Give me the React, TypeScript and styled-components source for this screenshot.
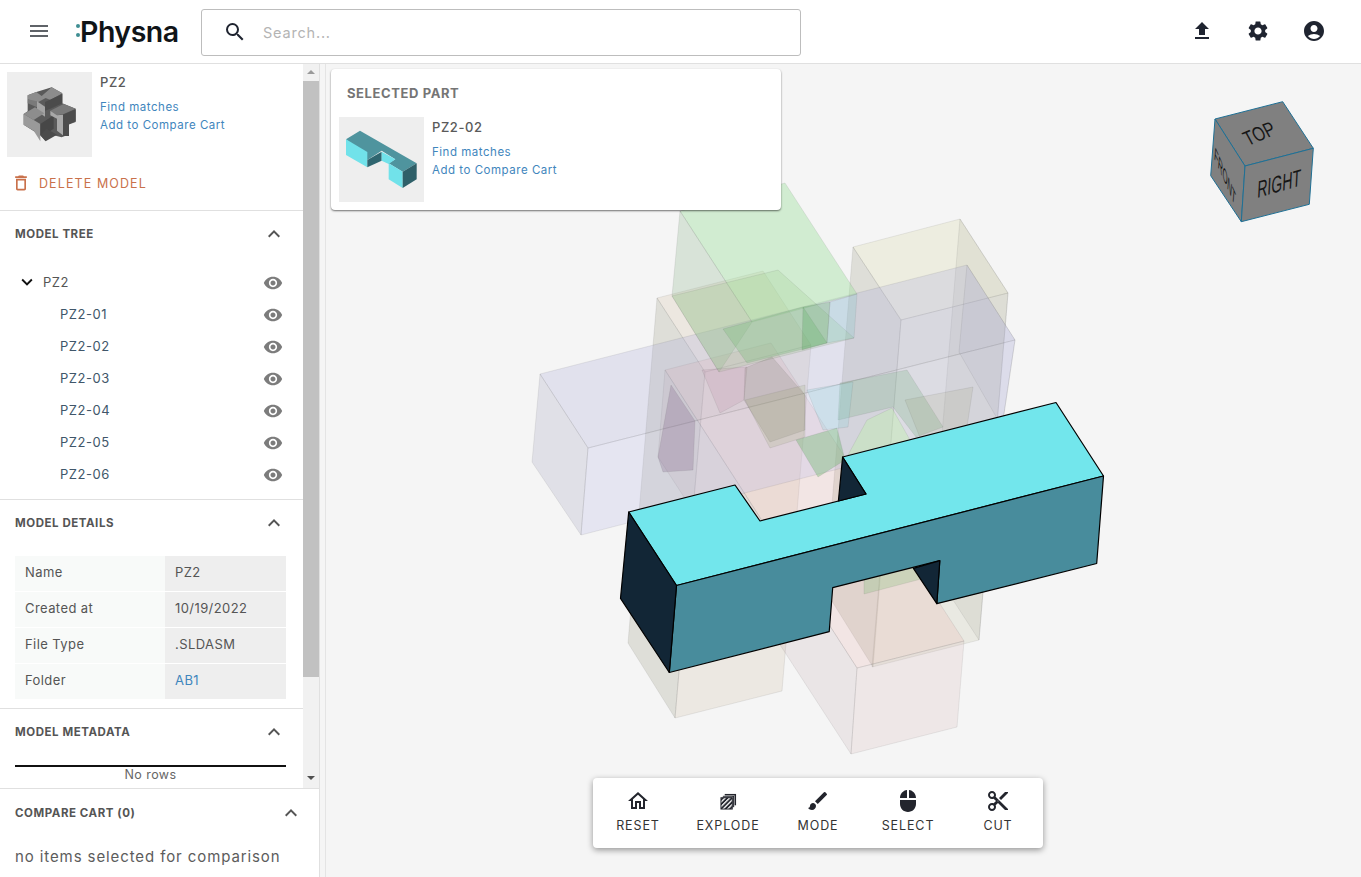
import React from "react";
import styled, { createGlobalStyle } from "styled-components";
import {
  MdMenu, MdSearch, MdFileUpload, MdSettings, MdAccountCircle, MdDeleteOutline,
  MdExpandLess, MdExpandMore, MdVisibility, MdOutlineHome, MdBrush, MdMouse, MdContentCut,
} from "react-icons/md";

const Global = createGlobalStyle`
  html, body { margin: 0; padding: 0; height: 100%; overflow: hidden; background: #fff; }
  * { box-sizing: border-box; }
  body { font-family: Inter, "Noto Sans", "Liberation Sans", sans-serif; }
`;

const Page = styled.div`width: 1361px; height: 877px; display: flex; flex-direction: column; overflow: hidden;`;
const Header = styled.header`
  height: 64px; flex: none; display: flex; align-items: center; border-bottom: 1px solid #e0e0e0; background: #fff;
  padding: 0 35px 1px 27px;
`;
const MenuButton = styled.div`display: flex; color: #5f6368; margin-right: 25px;`;
const Logo = styled.div`
  position: relative; width: 102px; margin-right: 23px; padding-left: 4px; margin-top: 2px;
  font-family: Inter, sans-serif; font-weight: 600; font-size: 28.5px; letter-spacing: -0.5px; color: #101418; line-height: 32px;
`;
const LogoDot = styled.i<{ $top: number }>`
  position: absolute; left: 0; top: ${(p) => p.$top}px; width: 4px; height: 4px; border-radius: 50%; background: #3f8e93;
`;
const Search = styled.div`
  width: 600px; height: 47px; margin-top: 2px; border: 1px solid #bdbdbd; border-radius: 3px; display: flex; align-items: center;
  padding-left: 21px; gap: 16px; color: #1f2430;
`;
const Placeholder = styled.span`font-size: 14.5px; letter-spacing: 0.8px; color: #b4b4b4;`;
const HeaderIcons = styled.div`margin-left: auto; display: flex; gap: 32px; color: #1f2430;`;

const Body = styled.div`flex: 1; display: flex; min-height: 0;`;
const Sidebar = styled.aside`width: 320px; flex: none; border-right: 1px solid #e0e0e0; display: flex; flex-direction: column; background: #fff;`;
const Gutter = styled.div`width: 6px; flex: none; background: #f5f5f5; border-right: 1px solid #e4e4e4;`;
const ScrollArea = styled.div`height: 725px; flex: none; display: flex; border-bottom: 1px solid #e0e0e0;`;
const ScrollContent = styled.div`width: 303px; flex: none; overflow: hidden;`;
const ScrollTrack = styled.div`flex: 1; background: #f1f1f1; display: flex; flex-direction: column; align-items: center; padding: 6px 0 0;`;
const ArrowUp = styled.i`width: 0; height: 0; border: 4px solid transparent; border-top: 0; border-bottom: 4px solid #9a9a9a;`;
const ArrowDown = styled.i`width: 0; height: 0; border: 4px solid transparent; border-bottom: 0; border-top: 4px solid #505050; margin-top: 99px;`;
const Thumb = styled.div`width: 100%; height: 596px; margin-top: 7px; background: #c1c1c1; flex: none;`;

const ModelHead = styled.div`height: 147px; padding: 8px 0 0 7px; border-bottom: 1px solid #e0e0e0;`;
const PartRow = styled.div`display: flex; gap: 8px;`;
const ThumbBox = styled.div`width: 85px; height: 85px; background: #eeeeee; flex: none;`;
const PartInfo = styled.div`display: flex; flex-direction: column; align-items: flex-start;`;
const PartName = styled.div`font-size: 13px; font-weight: 500; letter-spacing: 0.6px; color: #5a5a5a; line-height: 20px; margin-bottom: 6px;`;
const LinkText = styled.a`font-size: 11.5px; letter-spacing: 0.52px; color: #3f86bd; line-height: 18px;`;
const DeleteButton = styled.div`
  display: flex; align-items: center; gap: 8px; margin: 16px 0 0 4px; color: #c9714b; font-size: 12.5px; letter-spacing: 1.1px; text-transform: uppercase; height: 20px;
`;

const Section = styled.section<{ $h: number }>`display: flow-root; height: ${(p) => p.$h}px; padding: 0 17px 0 15px; border-bottom: 1px solid #e0e0e0;`;
const SectionHead = styled.div<{ $pt?: number }>`
  height: 20px; margin-top: ${(p) => p.$pt ?? 13}px; display: flex; justify-content: space-between; align-items: center;
  font-size: 11.5px; font-weight: 700; letter-spacing: 0.55px; color: #555; text-transform: uppercase; padding-right: 2px;
  svg { color: #555; margin-right: -2px; }
`;
const Tree = styled.div`padding: 22px 3px 0 0;`;
const TreeRow = styled.div<{ $child?: boolean }>`
  height: 32px; display: flex; align-items: center; justify-content: space-between; padding-left: ${(p) => (p.$child ? 45 : 1)}px;
  font-size: 13px; letter-spacing: 0.55px; color: #4a5560; svg.eye { color: #7c7c7c; margin-top: 1px; }
`;
const TreeLabel = styled.span`display: flex; align-items: center; gap: 5px; color: #555;`;
const TreeChild = styled.span`color: #40566a;`;
const DetailTable = styled.div`display: grid; grid-template-columns: 150px 121px; grid-auto-rows: 35px; row-gap: 1px; margin-top: 23px; font-size: 13px; letter-spacing: 0.42px; color: #555;`;
const Key = styled.div`background: #f8faf9; padding: 0 0 3px 10px; display: flex; align-items: center;`;
const Val = styled.div<{ $link?: boolean }>`background: #eeeeee; padding: 0 0 3px 10px; display: flex; align-items: center; color: ${(p) => (p.$link ? "#3f86bd" : "#555")};`;
const BlackLine = styled.div`height: 2px; background: #111; margin-top: 23px;`;
const NoRows = styled.div`text-align: center; font-size: 12.5px; letter-spacing: 0.45px; color: #666; line-height: 14px; margin-top: 1px;`;
const CartText = styled.div`font-size: 15px; letter-spacing: 0.9px; color: #5c5c5c; margin-top: 24px; line-height: 20px; white-space: nowrap;`;
const CartSection = styled.section`flex: 1; padding: 0 16px 0 15px;`;

const Viewer = styled.main`flex: 1; position: relative; background: #f5f5f5; overflow: hidden;`;
const Scene = styled.svg`display: block; width: 100%; height: 100%;`;
const Card = styled.div`
  position: absolute; left: 5px; top: 5px; width: 450px; height: 141px; background: #fff; border-radius: 4px;
  box-shadow: 0 1px 2px rgba(0,0,0,.55); padding: 14px 8px 0;
`;
const CardTitle = styled.div`font-size: 13px; font-weight: 700; letter-spacing: 0.6px; color: #757575; padding-left: 8px; line-height: 20px; margin-bottom: 14px;`;
const Toolbar = styled.div`
  position: absolute; left: 267px; top: 714px; width: 450px; height: 70px; background: #fff; border-radius: 4px;
  box-shadow: 0 2px 6px rgba(0,0,0,.4); display: flex;
`;
const ToolButton = styled.div`
  width: 90px; display: flex; flex-direction: column; align-items: center; padding-top: 11px; color: #23252d;
  span { margin-top: 5px; font-size: 12.5px; letter-spacing: 0.9px; line-height: 16px; color: #333; }
`;
const IconSlot = styled.div`height: 24px; display: flex; align-items: center; justify-content: center;`;

type Poly = [string, string];
const ghosts: Poly[] = [
  // tall beige-grey column, lower left
  ["657,298 763,271 811,345 705,372", "rgba(205,180,150,.22)"],
  ["657,298 705,372 675,718 628,643", "rgba(160,160,140,.28)"],
  ["705,372 811,345 782,691 675,718", "rgba(205,185,160,.22)"],
  // right tall beige column
  ["853,247 960,219 1008,293 901,320", "rgba(220,220,175,.3)"],
  ["853,247 901,320 873,667 825,590", "rgba(160,160,140,.28)"],
  ["901,320 1008,293 979,640 872,667", "rgba(190,190,160,.22)"],
  ["960,219 1008,293 979,640 931,566", "rgba(160,160,150,.16)"],
  // pink long box
  ["665,370 771,343 964,641 857,668", "rgba(230,175,170,.22)"],
  ["665,370 857,668 851,754 658,457", "rgba(190,160,165,.18)"],
  ["857,668 964,641 957,727 851,754", "rgba(215,180,180,.22)"],
  // lavender long block
  ["540,374 967,265 1015,340 588,448", "rgba(170,170,215,.26)"],
  ["540,374 588,448 581,535 532,462", "rgba(165,165,195,.26)"],
  ["588,448 1015,340 1002,427 581,535", "rgba(185,185,230,.26)"],
  ["967,265 1015,340 1002,427 959,352", "rgba(160,160,190,.12)"],
  // green block
  ["680,211 785,183 857,294 752,322", "rgba(160,225,160,.42)"],
  ["680,211 752,322 719,372 672,296", "rgba(150,185,150,.3)"],
  ["672,296 778,270 854,338 719,372", "rgba(150,200,130,.22)"],
  // inner accents
  ["723,329 803,307 827,343 747,363", "rgba(120,190,120,.32)"],
  ["803,307 830,302 827,343 802,350", "rgba(80,165,90,.32)"],
  ["830,302 857,294 854,338 827,343", "rgba(120,200,200,.22)"],
  ["702,370 747,367 744,400 720,413", "rgba(190,140,165,.2)"],
  ["671,385 695,421 693,470 663,472 658,457", "rgba(115,85,125,.24)"],
  ["745,368 772,357 805,395 805,430 770,442 744,400", "rgba(110,110,95,.18)"],
  ["745,400 805,385 805,437 770,448", "rgba(140,160,90,.16)"],
  ["796,440 837,428 845,460 818,477", "rgba(100,180,100,.36)"],
  ["867,420 892,408 910,440 848,455", "rgba(190,240,170,.4)"],
  ["840,383 907,370 943,427 916,437 893,407 838,420", "rgba(110,170,120,.24)"],
  ["807,390 853,382 848,427 823,430", "rgba(140,210,215,.26)"],
  ["864,580 913,568 925,578 864,594", "rgba(130,190,120,.28)"],
  ["905,400 973,387 965,440 925,450", "rgba(150,150,100,.14)"],
];

const Scene3D = () => (
  <Scene viewBox="326 64 1035 813">
    {ghosts.map(([points, fill], i) => (
      <polygon key={i} points={points} fill={fill} stroke="rgba(80,80,80,.13)" strokeWidth={0.8} />
    ))}
    <g stroke="#000" strokeWidth={1.2} strokeLinejoin="round">
      <polygon fill="#72e6ec" points="628.7,512 735,485 760,521 866,494 842.6,457 1056,402.5 1103.5,476 676.5,585.5" />
      <polygon fill="#488c9c" points="676.5,585.5 1103.5,476 1096.7,563.5 936.8,603.7 939.8,560.7 832.7,587.7 829.2,631.7 669.3,672.5" />
      <polygon fill="#122636" points="628.7,512 676.5,585.5 669.3,672.5 620.5,598.3" />
      <polygon fill="#122636" points="842.6,457 866,494 838.4,501" />
      <polygon fill="#122636" points="939.8,560.7 936.8,603.7 913.4,568.3" />
    </g>
    <g fill="#808080" stroke="#1f7095" strokeWidth={1} strokeLinejoin="round">
      <polygon points="1215,119 1282.7,101.7 1313.3,148.3 1245,166" />
      <polygon points="1215,119 1245,166 1241.3,221.7 1210.7,175.7" />
      <polygon points="1245,166 1313.3,148.3 1309.3,204.3 1241.3,221.7" />
    </g>
    <g fill="#161616" fontFamily="'Liberation Sans', sans-serif" fontSize="20">
      <text transform="matrix(.72 -.3 .5 .92 1248 146)">TOP</text>
      <text transform="matrix(.7 -.2 -.06 1.2 1257 198)">RIGHT</text>
      <text transform="matrix(.36 .82 -.08 1 1214 158)" fontSize="17">FRONT</text>
    </g>
  </Scene>
);

const AssemblyThumb = () => (
  <svg width="85" height="85" viewBox="0 0 255 255">
    <polygon fill="#5a5a5a" points="62,70 88,60 134,46 166,64 166,94 206,110 206,150 180,160 180,190 164,196 116,184 116,208 100,190 50,158 50,126 62,118" />
    <polygon fill="#8c8c8c" points="62,70 88,60 104,72 134,46 166,64 130,84 116,78 90,92 62,82" />
    <polygon fill="#a4a4a4" points="90,88 114,104 114,134 90,118" />
    <polygon fill="#7a7a7a" points="62,82 90,88 90,106 62,94" />
    <polygon fill="#4b4b4b" points="114,90 166,66 166,94 130,110 114,116" />
    <polygon fill="#8d8d8d" points="50,126 84,106 112,124 80,144" />
    <polygon fill="#9a9a9a" points="50,126 100,156 100,208 80,176 50,158" />
    <polygon fill="#474747" points="100,156 140,130 140,170 116,186 100,190" />
    <polygon fill="#7a7a7a" points="130,116 170,96 206,110 170,126 150,130" />
    <polygon fill="#a9a9a9" points="130,116 150,130 168,128 168,190 150,176 150,140 130,130" />
    <polygon fill="#4c4c4c" points="168,128 206,112 206,148 186,156 186,192 168,192" />
    <polygon fill="#4b4b4b" points="100,190 118,170 150,188 116,208" />
  </svg>
);

const PartThumb = () => (
  <svg width="85" height="85" viewBox="0 0 255 255">
    <polygon fill="#4f949e" points="21,67 63,41 233,139 191,164 149,139 169,127 128,101 85,129" />
    <polygon fill="#71e2ea" points="21,67 85,105 85,151 21,114" />
    <polygon fill="#2f6670" points="85,129 128,104 128,131 85,151" />
    <polygon fill="#71e2ea" points="128,104 169,127 149,141 128,131" />
    <polygon fill="#71e2ea" points="149,139 191,164 191,213 149,187" />
    <polygon fill="#2f6069" points="191,164 233,139 233,187 191,213" />
  </svg>
);

const ExplodeIcon = () => (
  <svg width="17" height="17" viewBox="0 0 18 18">
    <defs>
      <pattern id="hatch" width="3.4" height="3.4" patternUnits="userSpaceOnUse" patternTransform="rotate(45)">
        <rect width="3.4" height="3.4" fill="#23252d" />
        <rect width="1.4" height="3.4" fill="#fff" />
      </pattern>
    </defs>
    <rect x="5" y="1" width="12" height="12" fill="#23252d" />
    <path d="M3 4V2.8H15.2V14H14" fill="none" stroke="#fff" strokeWidth=".7" />
    <rect x="3" y="3" width="12" height="12" fill="#23252d" />
    <path d="M1.6 5.6V4.4H13.4V15.6" fill="none" stroke="#fff" strokeWidth=".7" />
    <rect x="1" y="5" width="12" height="12" fill="url(#hatch)" stroke="#23252d" strokeWidth="1" />
  </svg>
);

const parts = ["PZ2-01", "PZ2-02", "PZ2-03", "PZ2-04", "PZ2-05", "PZ2-06"];
const details: [string, string, boolean?][] = [
  ["Name", "PZ2"], ["Created at", "10/19/2022"], ["File Type", ".SLDASM"], ["Folder", "AB1", true],
];
const tools: [string, React.ReactNode][] = [
  ["RESET", <MdOutlineHome size={24} />],
  ["EXPLODE", <ExplodeIcon />],
  ["MODE", <MdBrush size={24} />],
  ["SELECT", <MdMouse size={24} />],
  ["CUT", <MdContentCut size={24} />],
];

export default function App() {
  return (
    <Page>
      <Global />
      <Header>
        <MenuButton><MdMenu size={24} /></MenuButton>
        <Logo><LogoDot $top={8} /><LogoDot $top={17} />Physna</Logo>
        <Search><MdSearch size={24} /><Placeholder>Search...</Placeholder></Search>
        <HeaderIcons><MdFileUpload size={24} /><MdSettings size={24} /><MdAccountCircle size={24} /></HeaderIcons>
      </Header>
      <Body>
        <Sidebar>
          <ScrollArea>
            <ScrollContent>
              <ModelHead>
                <PartRow>
                  <ThumbBox><AssemblyThumb /></ThumbBox>
                  <PartInfo>
                    <PartName>PZ2</PartName>
                    <LinkText>Find matches</LinkText>
                    <LinkText>Add to Compare Cart</LinkText>
                  </PartInfo>
                </PartRow>
                <DeleteButton><MdDeleteOutline size={20} />Delete Model</DeleteButton>
              </ModelHead>
              <Section $h={289}>
                <SectionHead>Model Tree<MdExpandLess size={24} /></SectionHead>
                <Tree>
                  <TreeRow>
                    <TreeLabel><MdExpandMore size={22} color="#111" />PZ2</TreeLabel>
                    <MdVisibility className="eye" size={20} />
                  </TreeRow>
                  {parts.map((p) => (
                    <TreeRow $child key={p}><TreeChild>{p}</TreeChild><MdVisibility className="eye" size={20} /></TreeRow>
                  ))}
                </Tree>
              </Section>
              <Section $h={209}>
                <SectionHead>Model Details<MdExpandLess size={24} /></SectionHead>
                <DetailTable>
                  {details.map(([k, v, l]) => (
                    <React.Fragment key={k}><Key>{k}</Key><Val $link={l}>{v}</Val></React.Fragment>
                  ))}
                </DetailTable>
              </Section>
              <Section $h={80}>
                <SectionHead>Model Metadata<MdExpandLess size={24} /></SectionHead>
                <BlackLine />
                <NoRows>No rows</NoRows>
              </Section>
            </ScrollContent>
            <ScrollTrack><ArrowUp /><Thumb /><ArrowDown /></ScrollTrack>
          </ScrollArea>
          <CartSection>
            <SectionHead $pt={14}>Compare Cart (0)<MdExpandLess size={24} /></SectionHead>
            <CartText>no items selected for comparison</CartText>
          </CartSection>
        </Sidebar>
        <Gutter />
        <Viewer>
          <Scene3D />
          <Card>
            <CardTitle>SELECTED PART</CardTitle>
            <PartRow>
              <ThumbBox><PartThumb /></ThumbBox>
              <PartInfo>
                <PartName>PZ2-02</PartName>
                <LinkText>Find matches</LinkText>
                <LinkText>Add to Compare Cart</LinkText>
              </PartInfo>
            </PartRow>
          </Card>
          <Toolbar>
            {tools.map(([label, icon]) => (
              <ToolButton key={label}><IconSlot>{icon}</IconSlot><span>{label}</span></ToolButton>
            ))}
          </Toolbar>
        </Viewer>
      </Body>
    </Page>
  );
}
